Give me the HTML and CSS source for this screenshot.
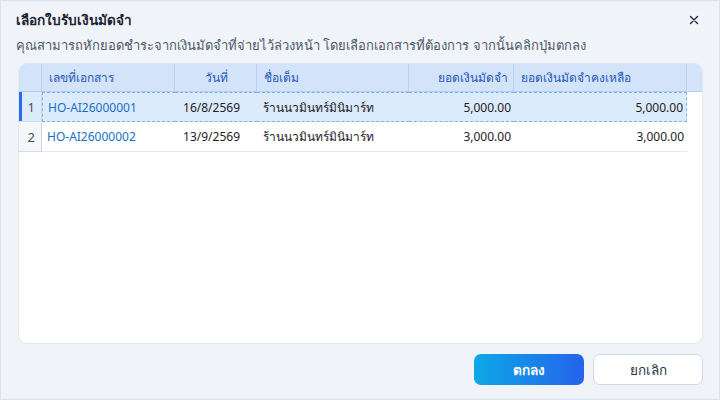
FILE: index.html
```html
<!DOCTYPE html>
<html lang="th">
<head>
<meta charset="utf-8">
<link rel="stylesheet" href="styles.css">
</head>
<body>
<div class="dialog">
  <div class="head">
    <div class="title">เลือกใบรับเงินมัดจำ</div>
    <span class="close">
      <svg width="10" height="10" viewBox="0 0 10 10"><path d="M1.5 1.5 L8.5 8.5 M8.5 1.5 L1.5 8.5" stroke="#1f2a44" stroke-width="1.4" stroke-linecap="round"/></svg>
    </span>
  </div>
  <div class="subtitle">คุณสามารถหักยอดชำระจากเงินมัดจำที่จ่ายไว้ล่วงหน้า โดยเลือกเอกสารที่ต้องการ จากนั้นคลิกปุ่มตกลง</div>
  <div class="panel">
    <table class="grid">
      <colgroup>
        <col class="c-num"><col class="c-doc"><col class="c-date"><col class="c-name"><col class="c-dep"><col class="c-rem"><col class="c-fill">
      </colgroup>
      <thead>
        <tr>
          <th class="num"></th>
          <th class="left">เลขที่เอกสาร</th>
          <th class="right date">วันที่</th>
          <th class="left">ชื่อเต็ม</th>
          <th class="right">ยอดเงินมัดจำ</th>
          <th class="left">ยอดเงินมัดจำคงเหลือ</th>
          <th class="fill"></th>
        </tr>
      </thead>
      <tbody>
        <tr class="sel">
          <td class="num"><span class="bar"></span>1</td>
          <td class="link first">HO-AI26000001</td>
          <td class="right date">16/8/2569</td>
          <td class="name">ร้านนวมินทร์มินิมาร์ท</td>
          <td class="right amt">5,000.00</td>
          <td class="right amt last">5,000.00</td>
          <td class="fill"></td>
        </tr>
        <tr>
          <td class="num">2</td>
          <td class="link">HO-AI26000002</td>
          <td class="right date">13/9/2569</td>
          <td class="name">ร้านนวมินทร์มินิมาร์ท</td>
          <td class="right amt">3,000.00</td>
          <td class="right amt">3,000.00</td>
          <td class="fill"></td>
        </tr>
      </tbody>
    </table>
  </div>
  <div class="foot">
    <button class="btn ok">ตกลง</button>
    <button class="btn cancel">ยกเลิก</button>
  </div>
</div>
</body>
</html>
```
FILE: styles.css
```css
html, body {
  margin: 0;
  padding: 0;
}
body {
  width: 720px;
  height: 400px;
  font-family: "Noto Sans", "Liberation Sans", "DejaVu Sans", sans-serif;
  color: #1f2329;
}
.dialog {
  box-sizing: border-box;
  width: 720px;
  height: 400px;
  background: #f0f4f9;
  border: 1px solid #dbe3ee;
  display: flex;
  flex-direction: column;
}
.head {
  display: flex;
  justify-content: space-between;
  align-items: center;
  padding: 8px 20px 0 15px;
  height: 22px;
}
.title {
  font-size: 13.6px;
  font-weight: 700;
  color: #1d2433;
}
.close {
  display: flex;
  align-items: center;
}
.subtitle {
  padding: 1px 0 0 15px;
  font-size: 13px;
  color: #4f5866;
  height: 31px;
  line-height: 26px;
}
.panel {
  margin-left: 17px;
  width: 685px;
  height: 281px;
  background: #fff;
  border: 1px solid #e1e7ef;
  border-radius: 9px;
  box-sizing: border-box;
  overflow: hidden;
}
.grid {
  border-collapse: separate;
  border-spacing: 0;
  table-layout: fixed;
  width: 685px;
  font-size: 12px;
}
.c-num { width: 23px; }
.c-doc { width: 133px; }
.c-date { width: 82px; }
.c-name { width: 152px; }
.c-dep { width: 105px; }
.c-rem { width: 173px; }
.c-fill { width: 17px; }
th {
  height: 27px;
  background: #d3e3f9;
  color: #2659b8;
  font-weight: 400;
  padding: 0 5px 0 7px;
  border-right: 1px solid #bcd4f3;
  border-bottom: 1px solid #b5cef0;
  white-space: nowrap;
}
th.date { padding-right: 28px; }
th.fill { border-right: 0; }
.left { text-align: left; }
.right { text-align: right; }
td {
  height: 29px;
  padding: 0 5px;
  border-bottom: 1px solid #e4e9f0;
  white-space: nowrap;
  overflow: hidden;
}
td.date { padding-right: 17px; }
td.name { padding-left: 6px; }
td.amt { padding-right: 3px; }
td.fill { border-bottom: 0; background: #fff; }
td.num {
  position: relative;
  text-align: right;
  padding: 0 6px 0 0;
  color: #4a4f58;
  background: #f4f6f9;
  border-right: 1px solid #cfd5dd;
  border-bottom: 1px solid #d7dce3;
  font-size: 13px;
}
td.link { color: #1a6fc4; padding-left: 5px; }
tr.sel td { background: #dcebfc; border-top: 1px dashed #7fb0e6; border-bottom: 1px dashed #7fb0e6; height: 28px; }
tr.sel td.num { border-top: 0; border-bottom: 1px solid #d7dce3; }
tr.sel td.fill { background: #fff; border: 0; }
tr.sel td.first { border-left: 1px dashed #7fb0e6; }
tr.sel td.last { border-right: 1px dashed #7fb0e6; }
.bar {
  position: absolute;
  left: 0;
  top: 0;
  bottom: 0;
  width: 3px;
  background: #2a6be8;
}
.foot {
  display: flex;
  justify-content: flex-end;
  gap: 9px;
  padding: 10px 16px 0 0;
}
.btn {
  height: 31px;
  border-radius: 7px;
  font-family: inherit;
  font-size: 13.5px;
  cursor: pointer;
}
.ok {
  width: 110px;
  border: 0;
  color: #fff;
  font-weight: 700;
  background: linear-gradient(90deg, #0ea8e6, #2563eb);
}
.cancel {
  width: 110px;
  background: #fff;
  border: 1px solid #cdd8e6;
  color: #2b3340;
}
```
